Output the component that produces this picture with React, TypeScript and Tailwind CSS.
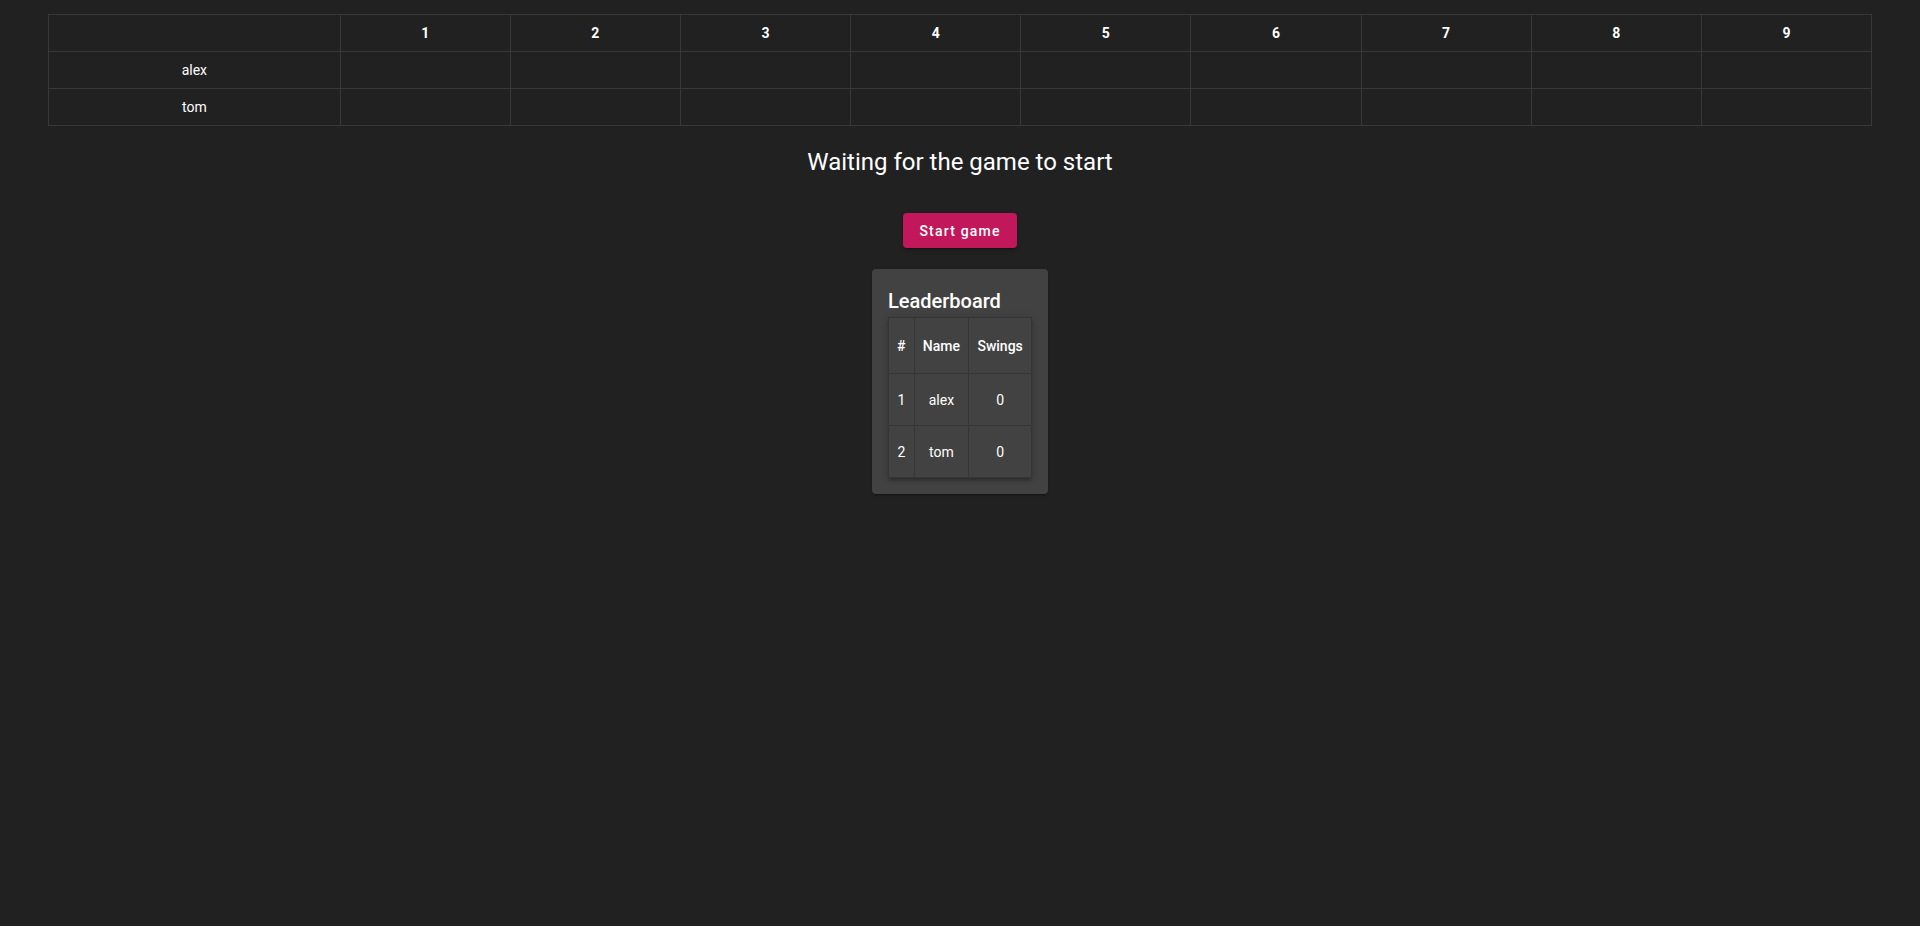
const holes = [1, 2, 3, 4, 5, 6, 7, 8, 9];
const players = [
  { name: 'alex', swings: 0 },
  { name: 'tom', swings: 0 },
];

export default function App() {
  return (
    <div
      className="min-h-screen bg-[#212121] text-white pt-[14px]"
      style={{ fontFamily: 'Roboto, "Liberation Sans", sans-serif' }}
    >
      {/* Scorecard */}
      <table className="mx-auto w-[95%] table-fixed border-collapse text-sm">
        <thead>
          <tr className="h-[37px]">
            <th className="w-[16%] border border-[#383838]" />
            {holes.map((h) => (
              <th key={h} className="border border-[#383838] font-bold text-center">
                {h}
              </th>
            ))}
          </tr>
        </thead>
        <tbody>
          {players.map((p) => (
            <tr key={p.name} className="h-[37px]">
              <td className="border border-[#383838] text-center">{p.name}</td>
              {holes.map((h) => (
                <td key={h} className="border border-[#383838]" />
              ))}
            </tr>
          ))}
        </tbody>
      </table>

      <h2 className="mt-5 text-center text-2xl leading-8 font-normal">Waiting for the game to start</h2>

      <div className="mt-[35px] flex justify-center">
        <button className="h-[35px] rounded px-4 bg-[#c2185b] text-sm font-medium tracking-[0.085em] text-white shadow-[0_3px_1px_-2px_rgba(0,0,0,0.2),0_2px_2px_0_rgba(0,0,0,0.14),0_1px_5px_0_rgba(0,0,0,0.12)]">
          Start game
        </button>
      </div>

      {/* Leaderboard */}
      <div className="mt-[21px] flex justify-center">
        <div className="w-[176px] rounded bg-[#424242] px-4 pb-4 shadow-[0_2px_1px_-1px_rgba(0,0,0,0.2),0_1px_1px_0_rgba(0,0,0,0.14),0_1px_3px_0_rgba(0,0,0,0.12)]">
          <h3 className="pt-4 text-xl leading-8 font-medium">Leaderboard</h3>
          <table className="w-full border-collapse bg-[#424242] text-sm shadow-[0_3px_3px_-2px_rgba(0,0,0,0.2),0_3px_4px_0_rgba(0,0,0,0.14),0_1px_8px_0_rgba(0,0,0,0.12)]">
            <thead>
              <tr>
                <th className="h-[56px] border border-[#363636] px-2 font-medium">#</th>
                <th className="h-[56px] border border-[#363636] px-2 font-medium">Name</th>
                <th className="h-[56px] border border-[#363636] px-2 font-medium">Swings</th>
              </tr>
            </thead>
            <tbody>
              {players.map((p, i) => (
                <tr key={p.name}>
                  <td className="h-[52px] border border-[#363636] px-2 text-center">{i + 1}</td>
                  <td className="h-[52px] border border-[#363636] px-2 text-center">{p.name}</td>
                  <td className="h-[52px] border border-[#363636] px-2 text-center">{p.swings}</td>
                </tr>
              ))}
            </tbody>
          </table>
        </div>
      </div>
    </div>
  );
}
